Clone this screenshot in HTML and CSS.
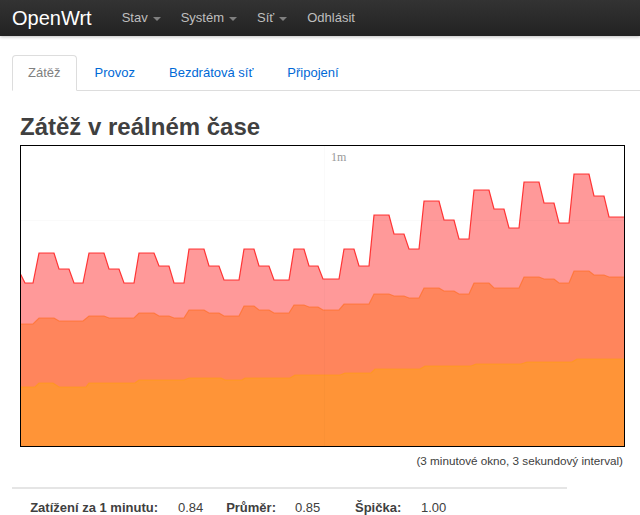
FILE: index.html
```html
<!DOCTYPE html>
<html lang="cs">
<head>
<meta charset="utf-8">
<title>OpenWrt - Zátěž</title>
<link rel="stylesheet" href="styles.css">
</head>
<body>
<header class="navbar">
  <a class="brand" href="#">OpenWrt</a>
  <ul class="nav">
    <li><a href="#">Stav<span class="caret"></span></a></li>
    <li><a href="#">Systém<span class="caret"></span></a></li>
    <li><a href="#">Síť<span class="caret"></span></a></li>
    <li><a href="#">Odhlásit</a></li>
  </ul>
</header>
<main class="container">
  <ul class="tabs">
    <li class="active"><a href="#">Zátěž</a></li>
    <li><a href="#">Provoz</a></li>
    <li><a href="#">Bezdrátová síť</a></li>
    <li><a href="#">Připojení</a></li>
  </ul>
  <section class="section">
    <h2>Zátěž v reálném čase</h2>
    <div class="chart">
      <svg width="603" height="300" viewBox="21 146 603 300" xmlns="http://www.w3.org/2000/svg">
        <polygon class="f01" points="20,273 25,283 33,283 39,253 54,253 59,269 69,269 74,283 83,283 89,253 104,253 109,269 119,269 124,283 134,283 139,253 154,253 159,266 169,266 174,283 184,283 189,249 204,249 209,266 219,266 224,280 239,280 244,249 254,249 259,266 269,266 274,280 289,280 294,249 304,249 309,266 318,266 323,279 339,279 344,249 354,249 359,266 369,266 374,215 389,215 394,234 404,234 409,249 419,249 424,201 439,201 444,220 454,220 459,239 469,239 474,190 489,190 494,209 504,209 509,228 519,228 524,182 539,182 544,203 554,203 559,223 569,223 574,174 589,174 594,196 604,196 609,217 625,217 625,447 20,447"/>
        <polyline class="l01" points="20,273 25,283 33,283 39,253 54,253 59,269 69,269 74,283 83,283 89,253 104,253 109,269 119,269 124,283 134,283 139,253 154,253 159,266 169,266 174,283 184,283 189,249 204,249 209,266 219,266 224,280 239,280 244,249 254,249 259,266 269,266 274,280 289,280 294,249 304,249 309,266 318,266 323,279 339,279 344,249 354,249 359,266 369,266 374,215 389,215 394,234 404,234 409,249 419,249 424,201 439,201 444,220 454,220 459,239 469,239 474,190 489,190 494,209 504,209 509,228 519,228 524,182 539,182 544,203 554,203 559,223 569,223 574,174 589,174 594,196 604,196 609,217 625,217"/>
        <polygon class="f05" points="20,324 33,324 39,318 54,318 59,321 83,321 89,316 104,316 109,318 134,318 139,313 154,313 159,316 169,316 174,318 184,318 189,310 204,310 209,313 219,313 224,316 239,316 244,306 254,306 259,310 269,310 274,313 289,313 294,305 304,305 309,307 318,307 323,310 339,310 344,304 369,304 374,294 389,294 394,296 404,296 409,298 419,298 424,288 439,288 444,291 454,291 459,294 469,294 474,283 489,283 494,288 519,288 524,277 539,277 544,279 554,279 559,283 569,283 574,271 589,271 594,275 604,275 609,277 625,277 625,447 20,447"/>
        <polyline class="l05" points="20,324 33,324 39,318 54,318 59,321 83,321 89,316 104,316 109,318 134,318 139,313 154,313 159,316 169,316 174,318 184,318 189,310 204,310 209,313 219,313 224,316 239,316 244,306 254,306 259,310 269,310 274,313 289,313 294,305 304,305 309,307 318,307 323,310 339,310 344,304 369,304 374,294 389,294 394,296 404,296 409,298 419,298 424,288 439,288 444,291 454,291 459,294 469,294 474,283 489,283 494,288 519,288 524,277 539,277 544,279 554,279 559,283 569,283 574,271 589,271 594,275 604,275 609,277 625,277"/>
        <polygon class="f15" points="20,387 35,387 39,383 53,383 59,387 86,387 89,383 135,383 139,380 184,380 189,378 221,378 225,380 242,380 245,378 290,378 295,375 340,375 345,373 371,373 375,369 420,369 425,366 471,366 476,364 521,364 527,362 572,362 577,359 625,359 625,447 20,447"/>
        <polyline class="l15" points="20,387 35,387 39,383 53,383 59,387 86,387 89,383 135,383 139,380 184,380 189,378 221,378 225,380 242,380 245,378 290,378 295,375 340,375 345,373 371,373 375,369 420,369 425,366 471,366 476,364 521,364 527,362 572,362 577,359 625,359"/>
        <line class="grid" x1="324.5" y1="146" x2="324.5" y2="446"/>
        <line class="grid" x1="21" y1="220.5" x2="624" y2="220.5"/>
        <text class="tick" x="331" y="161">1m</text>
      </svg>
    </div>
    <div class="caption">(3 minutové okno, 3 sekundový interval)</div>
  </section>
  <hr class="rule">
  <div class="stats">
    <strong class="label l1">Zatížení za 1 minutu:</strong>
    <span class="value v1">0.84</span>
    <strong class="label l2">Průměr:</strong>
    <span class="value v2">0.85</span>
    <strong class="label l3">Špička:</strong>
    <span class="value">1.00</span>
  </div>
</main>
</body>
</html>
```
FILE: styles.css
```css
html, body {
  margin: 0;
  padding: 0;
  background: #fff;
}
body {
  font-family: "Liberation Sans", Arial, sans-serif;
  font-size: 13px;
  line-height: 18px;
  color: #404040;
}
a { text-decoration: none; }

.navbar {
  height: 36px;
  display: flex;
  align-items: center;
  background: linear-gradient(#333333, #222222);
  box-shadow: 0 1px 3px rgba(0, 0, 0, 0.25);
}
.brand {
  color: #ffffff;
  font-size: 20px;
  line-height: 36px;
  padding: 0 20px 0 12px;
}
.nav {
  list-style: none;
  margin: 0;
  padding: 0;
  display: flex;
}
.nav a {
  display: flex;
  align-items: center;
  padding: 0 10px;
  line-height: 36px;
  color: #bfbfbf;
  font-size: 13px;
}
.caret {
  display: inline-block;
  width: 0;
  height: 0;
  margin-left: 5px;
  margin-top: 1px;
  border-left: 4px solid transparent;
  border-right: 4px solid transparent;
  border-top: 4px solid #808080;
}

.container {
  padding: 0 0 0 12px;
}
.tabs {
  list-style: none;
  margin: 19px 0 0 0;
  padding: 0;
  display: flex;
  border-bottom: 1px solid #dddddd;
}
.tabs li {
  margin-bottom: -1px;
}
.tabs a {
  display: block;
  padding: 0 15px;
  margin-right: 2px;
  line-height: 34px;
  border: 1px solid transparent;
  border-radius: 4px 4px 0 0;
  color: #0069d6;
}
.tabs .active a {
  color: #808080;
  background: #fff;
  border-color: #dddddd #dddddd transparent;
}

.section {
  padding: 0 15px 0 8px;
}
h2 {
  margin: 18px 0 0 0;
  font-size: 24px;
  line-height: 36px;
  font-weight: bold;
  color: #404040;
}
.chart {
  border: 1px solid #000;
  width: 603px;
  height: 300px;
}
.chart svg {
  display: block;
}
.f01 { fill: #ff0000; fill-opacity: 0.4; }
.l01 { fill: none; stroke: #ff1a1a; stroke-width: 1.2; stroke-opacity: 0.85; }
.f05 { fill: #ff6600; fill-opacity: 0.4; }
.l05 { fill: none; stroke: #ff6a1a; stroke-width: 1.2; stroke-opacity: 0.6; }
.f15 { fill: #ffaa00; fill-opacity: 0.4; }
.l15 { fill: none; stroke: #ffa000; stroke-width: 1.2; stroke-opacity: 0.5; }
.grid { stroke: #000; stroke-opacity: 0.02; stroke-width: 1; }
.tick {
  fill: #999999;
  font-family: "Liberation Serif", "Times New Roman", serif;
  font-size: 12px;
}
.caption {
  margin-top: 5px;
  text-align: right;
  font-size: 11.7px;
  padding-right: 2px;
}

.rule {
  width: 555px;
  margin: 17px 0 0 0;
  border: 0;
  border-top: 2px solid #e5e5e5;
  height: 0;
}
.stats {
  display: grid;
  grid-template-columns: 148px 48px 69px 60px 66px auto;
  padding: 10px 0 0 18px;
}
.label {
  text-align: right;
  padding-right: 20px;
  white-space: nowrap;
}
.l2 { padding-right: 19px; }
```
